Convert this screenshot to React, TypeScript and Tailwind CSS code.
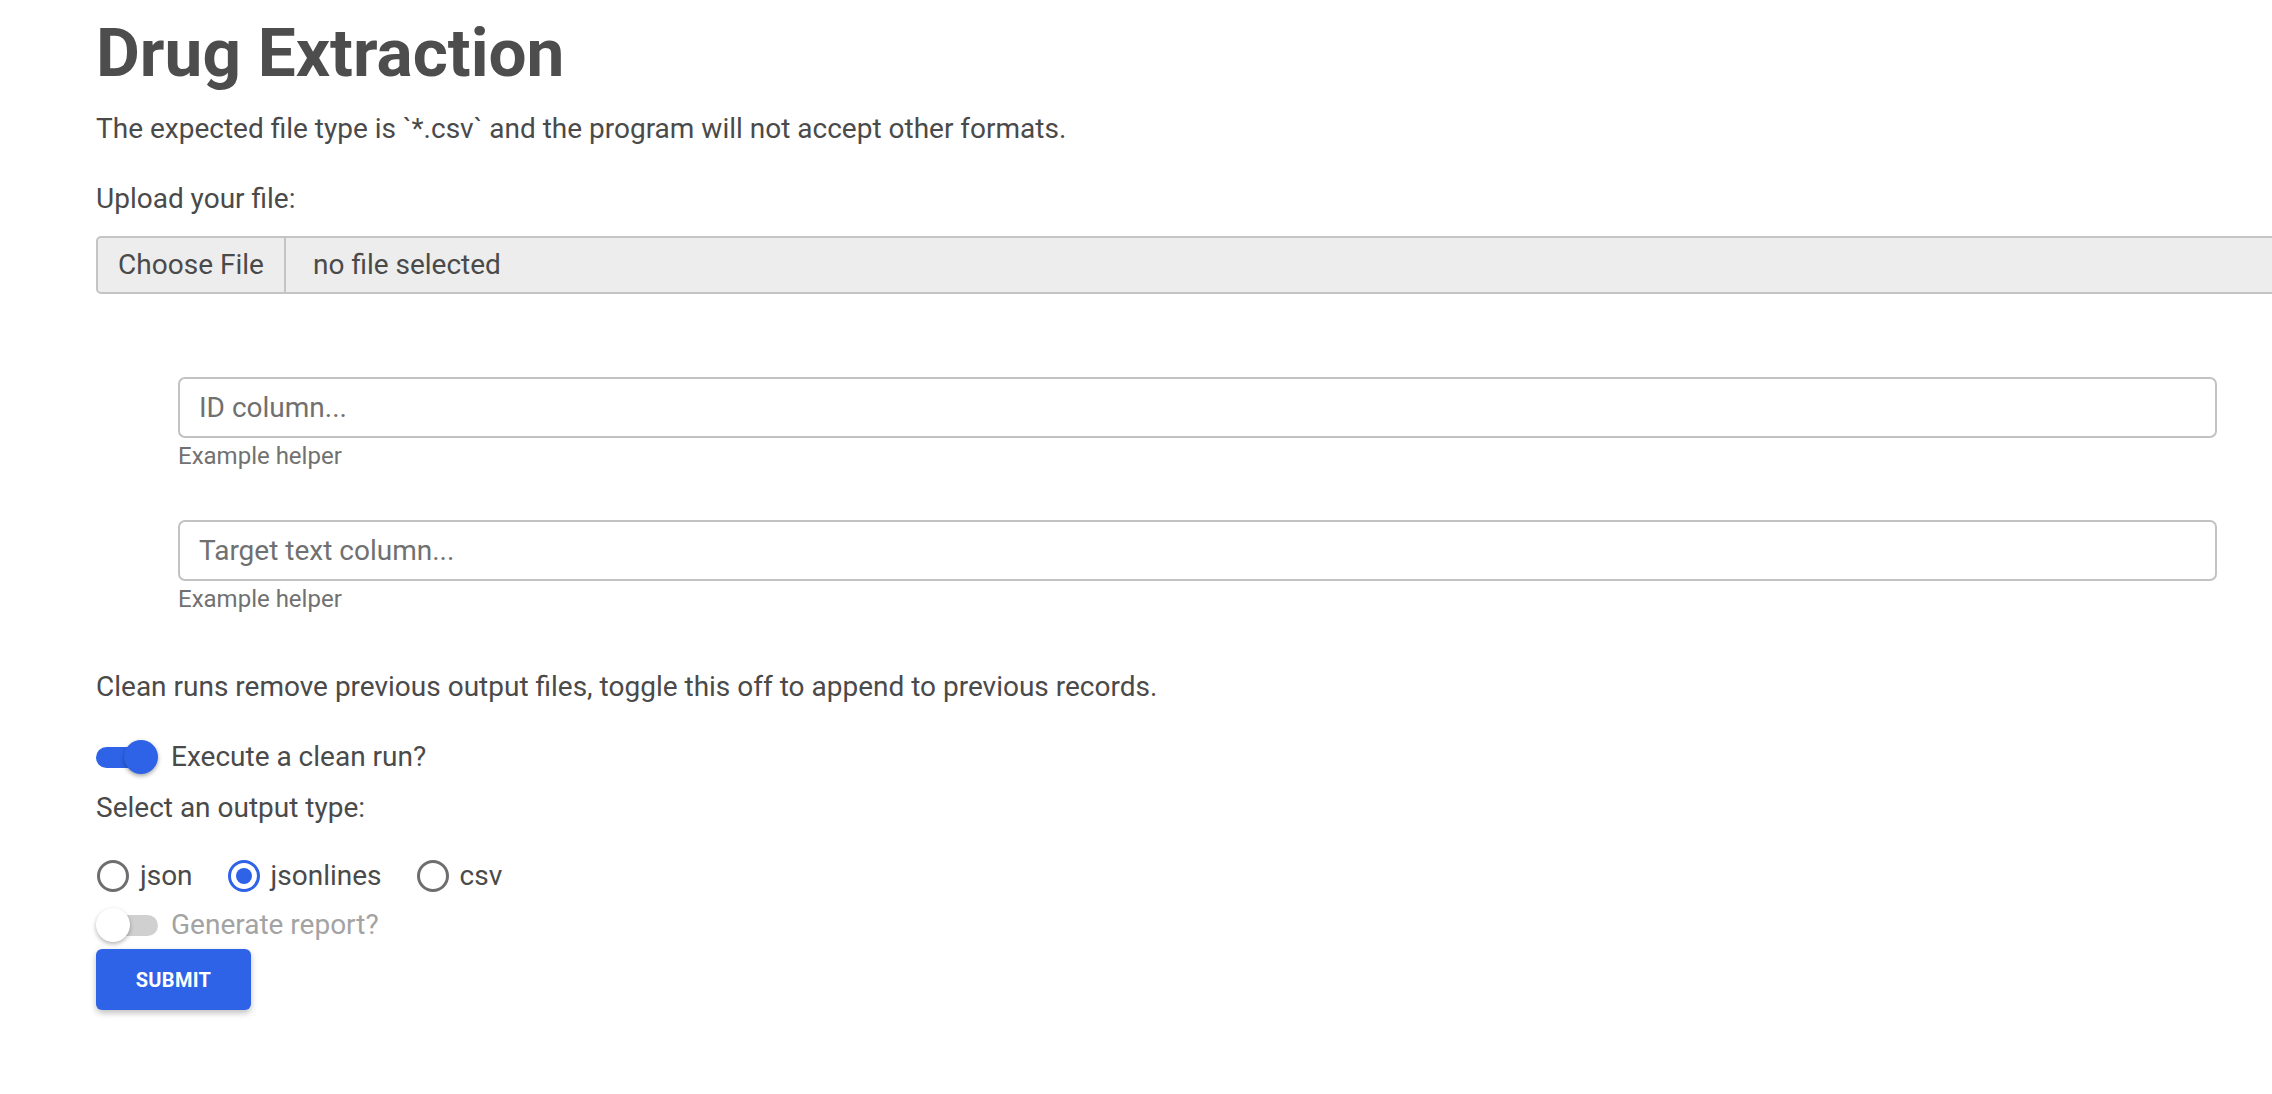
import React from "react";

function Toggle({ checked }: { checked: boolean }) {
  return (
    <div className="relative h-[40px] w-[62px] shrink-0">
      {checked ? (
        <>
          <div className="absolute left-0 top-[10px] h-[21px] w-[58px] rounded-full bg-[#2e63e8]" />
          <div className="absolute left-[28px] top-[3px] h-[34px] w-[34px] rounded-full bg-[#2e63e8] shadow-[0_2px_4px_rgba(0,0,0,0.35)]" />
        </>
      ) : (
        <>
          <div className="absolute left-[4px] top-[10px] h-[21px] w-[58px] rounded-full bg-[#d0d0d0]" />
          <div className="absolute left-0 top-[3px] h-[34px] w-[34px] rounded-full bg-white shadow-[0_2px_4px_rgba(0,0,0,0.3)]" />
        </>
      )}
    </div>
  );
}

function Radio({ label, checked }: { label: string; checked?: boolean }) {
  return (
    <div className="flex items-center">
      <div
        className={
          checked
            ? "flex h-[32px] w-[32px] items-center justify-center rounded-full border-[3px] border-[#2e63e8]"
            : "flex h-[32px] w-[32px] items-center justify-center rounded-full border-[3px] border-[#6e6e6e]"
        }
      >
        {checked && <div className="h-[16px] w-[16px] rounded-full bg-[#2e63e8]" />}
      </div>
      <span className="ml-[11px] text-[28px] leading-[32px]">{label}</span>
    </div>
  );
}

export default function App() {
  return (
    <div className="min-h-screen overflow-hidden bg-white font-['Roboto',sans-serif] text-[#4a4a4a]">
      <div className="pl-[96px] pb-[80px]">
        <h1 className="mt-[13px] text-[67.5px] font-bold leading-[80px] text-[#4d4d4d]">Drug Extraction</h1>
        <p className="mt-[20px] text-[28px] leading-[32px]">
          The expected file type is `*.csv` and the program will not accept other formats.
        </p>
        <p className="mt-[38px] text-[28px] leading-[32px]">Upload your file:</p>
        <div className="mt-[21px] flex h-[58px] w-[2300px] rounded-[5px] border-2 border-[#c4c4c4] bg-[#ededed] text-[28px]">
          <div className="flex w-[188px] items-center justify-center border-r-2 border-[#c4c4c4]">Choose File</div>
          <div className="flex items-center pl-[27px]">no file selected</div>
        </div>

        <div className="ml-[82px] mt-[83px] w-[2039px]">
          <input
            type="text"
            placeholder="ID column..."
            className="block h-[61px] w-full rounded-[7px] border-2 border-[#c2c2c2] bg-white px-[19px] text-[28px] text-[#4a4a4a] outline-none placeholder:text-[#707070]"
          />
          <div className="mt-[4px] text-[24px] leading-[28px] text-[#717171]">Example helper</div>
          <input
            type="text"
            placeholder="Target text column..."
            className="mt-[50px] block h-[61px] w-full rounded-[7px] border-2 border-[#c2c2c2] bg-white px-[19px] text-[28px] text-[#4a4a4a] outline-none placeholder:text-[#707070]"
          />
          <div className="mt-[4px] text-[24px] leading-[28px] text-[#717171]">Example helper</div>
        </div>

        <p className="mt-[58px] text-[28px] leading-[32px]">
          Clean runs remove previous output files, toggle this off to append to previous records.
        </p>

        <div className="mt-[34px] flex h-[40px] items-center">
          <Toggle checked />
          <span className="ml-[13px] text-[28px] leading-[32px]">Execute a clean run?</span>
        </div>

        <p className="mt-[15px] text-[28px] leading-[32px]">Select an output type:</p>

        <div className="mt-[32px] flex h-[40px] items-center gap-[35px] pl-[1px]">
          <Radio label="json" />
          <Radio label="jsonlines" checked />
          <Radio label="csv" />
        </div>

        <div className="mt-[9px] flex h-[40px] items-center">
          <Toggle checked={false} />
          <span className="ml-[13px] text-[28px] leading-[32px] text-[#a3a3a3]">Generate report?</span>
        </div>

        <button className="mt-[4px] flex h-[61px] w-[155px] items-center justify-center rounded-[6px] bg-[#2e63e8] text-[20px] font-bold tracking-[0.3px] text-white shadow-[0_3px_6px_rgba(0,0,0,0.25)]">
          SUBMIT
        </button>
      </div>
    </div>
  );
}
